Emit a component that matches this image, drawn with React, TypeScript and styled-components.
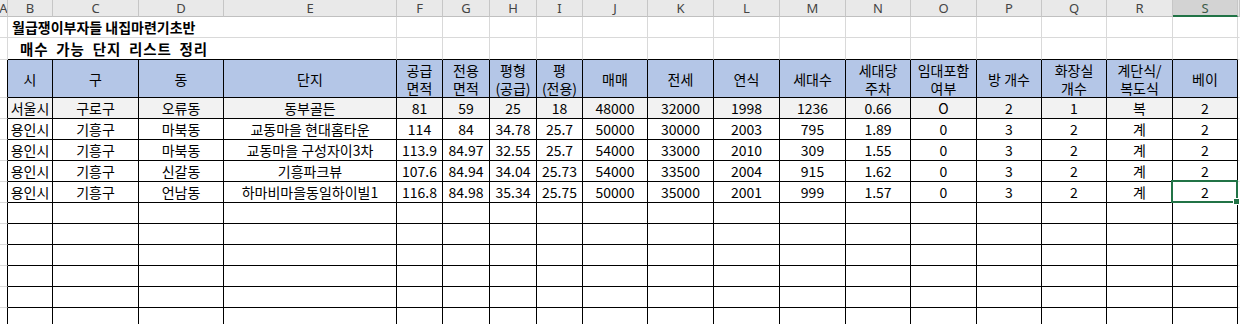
import React from "react";
import styled, { createGlobalStyle, css } from "styled-components";

const GlobalStyle = createGlobalStyle`
  html, body { margin: 0; padding: 0; background: #ffffff; }
  body { font-family: "Noto Sans CJK KR", "Noto Sans", sans-serif; }
`;

const WIDTHS = [8, 45, 86, 85, 173, 46, 47, 47, 46, 65, 66, 66, 66, 65, 66, 65, 65, 66, 65, 2];
const LETTERS = "ABCDEFGHIJKLMNOPQRST".split("");
const EMPTY_ROWS = 6;

const GRID = "#d9d9d9";
const INK = "#000000";

const Sheet = styled.div`
  display: grid;
  grid-template-columns: ${WIDTHS.map((w) => `${w}px`).join(" ")};
  grid-template-rows: 17px 21px 22px 38px repeat(${5 + EMPTY_ROWS}, 21px);
  width: 1240px;
  height: 324px;
  overflow: hidden;
  background: #ffffff;
  color: ${INK};
`;

const ColHead = styled.div<{ $selected?: boolean }>`
  box-sizing: border-box;
  display: flex;
  align-items: center;
  justify-content: center;
  overflow: hidden;
  font-family: "Noto Sans", "Liberation Sans", sans-serif;
  font-size: 13px;
  color: ${(p) => (p.$selected ? "#3a5a47" : "#444")};
  background: ${(p) => (p.$selected ? "#d3d3d3" : "#e9e9e9")};
  border-right: 1px solid #c6c6c6;
  border-bottom: ${(p) => (p.$selected ? "2px solid #217346" : "1px solid #c0c0c0")};
`;

const Cell = styled.div<{ $right?: string; $bottom?: string; $bg?: string }>`
  box-sizing: border-box;
  position: relative;
  border-right: 1px solid ${(p) => p.$right ?? GRID};
  border-bottom: 1px solid ${(p) => p.$bottom ?? GRID};
  background: ${(p) => p.$bg ?? "transparent"};
`;

const TitleCell = styled(Cell)<{ $wide?: boolean }>`
  grid-column: span 4;
  display: flex;
  align-items: center;
  padding-left: ${(p) => (p.$wide ? "12px" : "4px")};
  font-size: ${(p) => (p.$wide ? "14.5px" : "14px")};
  font-weight: 700;
  white-space: nowrap;
  ${(p) =>
    p.$wide &&
    css`
      word-spacing: 4px;
      letter-spacing: 0.8px;
    `}
`;

const HeadCell = styled(Cell)`
  display: flex;
  flex-direction: column;
  align-items: center;
  justify-content: center;
  font-size: 14px;
  line-height: 18px;
  white-space: nowrap;
  overflow: hidden;
`;

const DataCell = styled(Cell)<{ $active?: boolean }>`
  display: flex;
  align-items: center;
  justify-content: center;
  font-size: 14px;
  line-height: 20px;
  white-space: nowrap;
  overflow: ${(p) => (p.$active ? "visible" : "hidden")};
  z-index: ${(p) => (p.$active ? 2 : "auto")};
`;

const Selection = styled.div`
  position: absolute;
  left: -2px;
  top: -2px;
  right: -1px;
  bottom: -1px;
  border: 2px solid #217346;
  pointer-events: none;
`;

const Handle = styled.div`
  position: absolute;
  right: -4px;
  bottom: -4px;
  width: 5px;
  height: 5px;
  background: #217346;
  border: 1px solid #ffffff;
`;

const HEADERS: string[][] = [
  ["시"],
  ["구"],
  ["동"],
  ["단지"],
  ["공급", "면적"],
  ["전용", "면적"],
  ["평형", "(공급)"],
  ["평", "(전용)"],
  ["매매"],
  ["전세"],
  ["연식"],
  ["세대수"],
  ["세대당", "주차"],
  ["임대포함", "여부"],
  ["방 개수"],
  ["화장실", "개수"],
  ["계단식/", "복도식"],
  ["베이"],
];

const ROWS: string[][] = [
  ["서울시", "구로구", "오류동", "동부골든", "81", "59", "25", "18", "48000", "32000", "1998", "1236", "0.66", "O", "2", "1", "복", "2"],
  ["용인시", "기흥구", "마북동", "교동마을 현대홈타운", "114", "84", "34.78", "25.7", "50000", "30000", "2003", "795", "1.89", "0", "3", "2", "계", "2"],
  ["용인시", "기흥구", "마북동", "교동마을 구성자이3차", "113.9", "84.97", "32.55", "25.7", "54000", "33000", "2010", "309", "1.55", "0", "3", "2", "계", "2"],
  ["용인시", "기흥구", "신갈동", "기흥파크뷰", "107.6", "84.94", "34.04", "25.73", "54000", "33500", "2004", "915", "1.62", "0", "3", "2", "계", "2"],
  ["용인시", "기흥구", "언남동", "하마비마을동일하이빌1", "116.8", "84.98", "35.34", "25.75", "50000", "35000", "2001", "999", "1.57", "0", "3", "2", "계", "2"],
];

const SELECTED_ROW = 4;
const SELECTED_COL = 17;

export default function App() {
  const cells: React.ReactNode[] = [];

  LETTERS.forEach((l, i) => {
    cells.push(
      <ColHead key={`h-${l}`} $selected={l === "S"}>
        {i < 19 ? l : ""}
      </ColHead>
    );
  });

  const titleRow = (key: string, text: string, wide: boolean, lastBlack: boolean) => {
    cells.push(<Cell key={`${key}-a`} />);
    cells.push(
      <TitleCell key={`${key}-t`} $wide={wide} $bottom={lastBlack ? INK : GRID}>
        {text}
      </TitleCell>
    );
    for (let c = 5; c < 19; c++) {
      cells.push(<Cell key={`${key}-${c}`} $bottom={lastBlack ? INK : GRID} />);
    }
    cells.push(<Cell key={`${key}-t2`} $right="transparent" />);
  };
  titleRow("r1", "월급쟁이부자들 내집마련기초반", false, false);
  titleRow("r2", "매수 가능 단지 리스트 정리", true, true);

  cells.push(<Cell key="hd-a" $right={INK} />);
  HEADERS.forEach((lines, i) => {
    cells.push(
      <HeadCell key={`hd-${i}`} $right={INK} $bottom={INK} $bg="#b4c6e7">
        {lines.map((t) => (
          <span key={t}>{t}</span>
        ))}
      </HeadCell>
    );
  });
  cells.push(<Cell key="hd-t" $right="transparent" />);

  ROWS.forEach((row, r) => {
    cells.push(<Cell key={`d${r}-a`} $right={INK} />);
    row.forEach((v, c) => {
      const active = r === SELECTED_ROW && c === SELECTED_COL;
      cells.push(
        <DataCell
          key={`d${r}-${c}`}
          $right={INK}
          $bottom={INK}
          $bg={r === 0 ? "#f2f2f2" : "#ffffff"}
          $active={active}
        >
          {v}
          {active && (
            <Selection>
              <Handle />
            </Selection>
          )}
        </DataCell>
      );
    });
    cells.push(<Cell key={`d${r}-t`} $right="transparent" />);
  });

  for (let r = 0; r < EMPTY_ROWS; r++) {
    cells.push(<Cell key={`e${r}-a`} $right={INK} />);
    for (let c = 0; c < 18; c++) {
      cells.push(<DataCell key={`e${r}-${c}`} $right={INK} $bottom={INK} />);
    }
    cells.push(<Cell key={`e${r}-t`} $right="transparent" />);
  }

  return (
    <>
      <GlobalStyle />
      <Sheet>{cells}</Sheet>
    </>
  );
}
